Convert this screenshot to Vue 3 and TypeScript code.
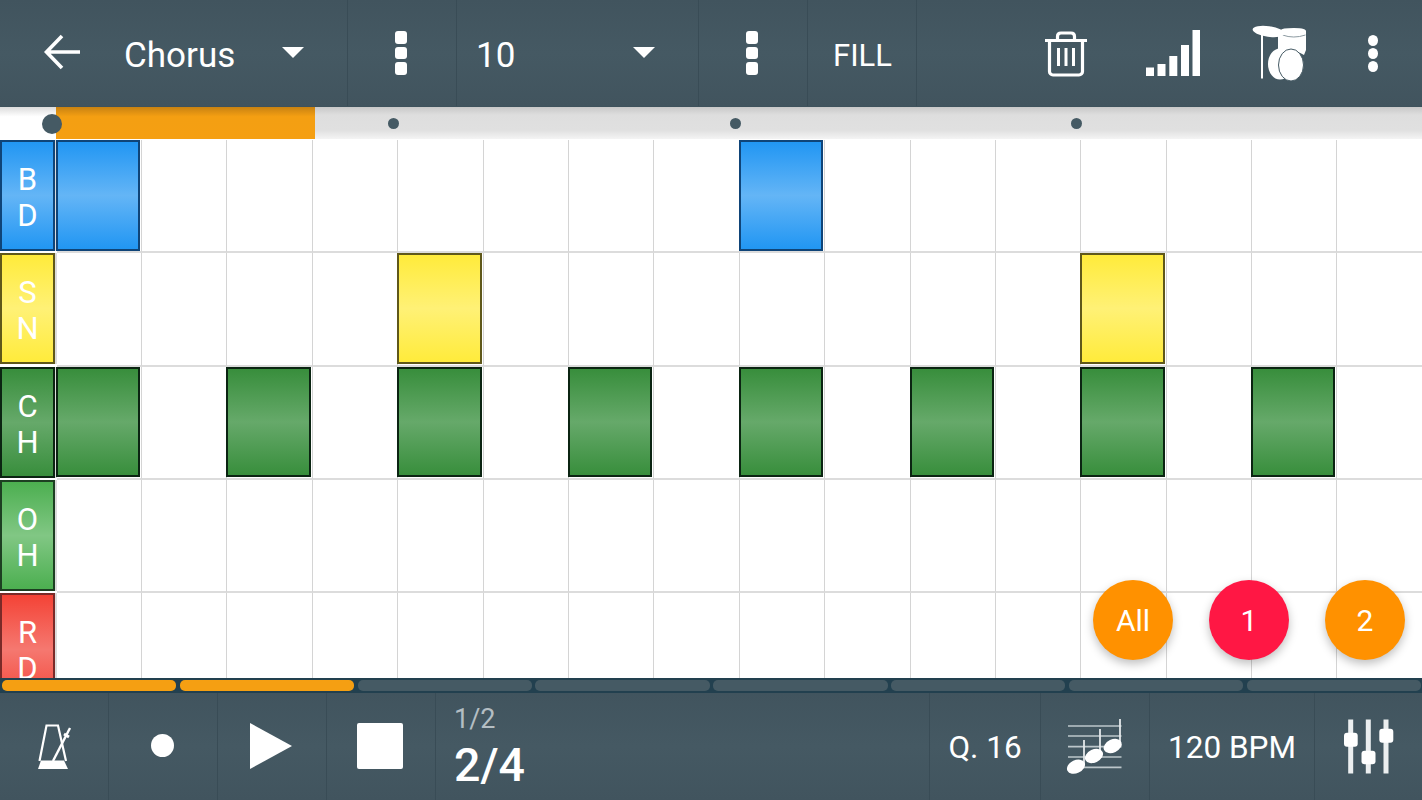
<script setup lang="ts">
type Lane = { label: string[]; kind: string; steps: number[] }

const lanes: Lane[] = [
  { label: ['B', 'D'], kind: 'blue', steps: [0, 8] },
  { label: ['S', 'N'], kind: 'yellow', steps: [4, 12] },
  { label: ['C', 'H'], kind: 'dkgreen', steps: [0, 2, 4, 6, 8, 10, 12, 14] },
  { label: ['O', 'H'], kind: 'green', steps: [] },
  { label: ['R', 'D'], kind: 'red', steps: [] }
]
const stepIndexes = Array.from({ length: 16 }, (_, i) => i)
const patterns = [true, true, false, false, false, false, false, false]
const markers = [393, 735, 1076]
</script>

<template>
  <div class="app">
    <header class="bar top">
      <div class="cell back">
        <svg width="40" height="40" viewBox="0 0 40 40" class="ico">
          <path d="M38 20H5M20 4 4.500 20 20 36" fill="none" stroke="#fff" stroke-width="3.600" />
        </svg>
        <span class="title">Chorus</span>
        <span class="caret"></span>
      </div>
      <div class="cell more"><span class="dots"><i></i><i></i><i></i></span></div>
      <div class="cell num">
        <span class="title">10</span>
        <span class="caret"></span>
      </div>
      <div class="cell more"><span class="dots"><i></i><i></i><i></i></span></div>
      <div class="cell fill">FILL</div>
      <div class="tools">
        <svg class="t-trash" width="42" height="46" viewBox="0 0 42 46">
          <path d="M0 9.500h42M4.500 9.500v31a3.500 3.500 0 0 0 3.500 3.500h26a3.500 3.500 0 0 0 3.500-3.500v-31M12.500 9V5.500Q12.500 2 16 2h10q3.500 0 3.500 3.500V9" fill="none" stroke="#fff" stroke-width="3.200" />
          <path d="M13.500 17v18M21 17v18M28.500 17v18" stroke="#fff" stroke-width="3" />
        </svg>
        <svg class="t-bars" width="54" height="46" viewBox="0 0 54 46">
          <rect x="0" y="37.500" width="8" height="8.500" fill="#fff" />
          <rect x="11.500" y="34" width="8" height="12" fill="#fff" />
          <rect x="23.300" y="26" width="8" height="20" fill="#fff" />
          <rect x="35" y="15" width="8" height="31" fill="#fff" />
          <rect x="46.500" y="0" width="7.500" height="46" fill="#fff" />
        </svg>
        <svg class="t-drum" width="70" height="65" viewBox="0 0 70 65">
          <path d="M36 10q0-2 13-2t12 4v18l-2 5q-10-6-20-4l-6 3V16z" fill="#fff" />
          <path d="M37.500 15q11 4 23 0" fill="none" stroke="#8d9ba2" stroke-width="1" />
          <path d="M17 14v44.500" stroke="#fff" stroke-width="2" />
          <ellipse cx="23.500" cy="11.500" rx="16" ry="5.300" transform="rotate(8 23.500 11.500)" fill="#fff" />
          <ellipse cx="35" cy="44" rx="12" ry="15.500" fill="#fff" />
          <ellipse cx="46" cy="45" rx="12.500" ry="16" fill="#fff" stroke="#455a64" stroke-width="1" />
        </svg>
        <span class="dots round"><i></i><i></i><i></i></span>
      </div>
    </header>

    <div class="timeline">
      <div class="progress"></div>
      <span class="playhead"></span>
      <span v-for="m in markers" :key="m" class="marker" :style="{ left: m + 'px' }"></span>
    </div>

    <main class="grid-wrap">
      <div class="grid">
        <template v-for="lane in lanes" :key="lane.kind">
          <div class="lane-head" :class="lane.kind">
            <span v-for="c in lane.label" :key="c">{{ c }}</span>
          </div>
          <div v-for="s in stepIndexes" :key="s" class="step">
            <div v-if="lane.steps.includes(s)" class="note" :class="lane.kind"></div>
          </div>
        </template>
      </div>
      <div class="fabs">
        <button type="button" class="fab orange">All</button>
        <button type="button" class="fab pink">1</button>
        <button type="button" class="fab orange">2</button>
      </div>
    </main>

    <div class="patterns">
      <span v-for="(on, i) in patterns" :key="i" class="pat" :class="{ on }"></span>
    </div>

    <footer class="bar bottom">
      <div class="cell b-icon">
        <svg class="metro" width="50" height="60" viewBox="0 0 50 60">
          <path d="M8.500 45 15.500 9.500H27L35 45" fill="none" stroke="#fff" stroke-width="2.200" />
          <path d="M10 44.500h23l4 8.500H7z" fill="#fff" />
          <path d="M22 45 39 12" stroke="#fff" stroke-width="2.400" />
          <path d="m33 18 5 3" stroke="#fff" stroke-width="3" />
        </svg>
      </div>
      <div class="cell b-icon"><span class="rec"></span></div>
      <div class="cell b-icon">
        <svg width="44" height="48" viewBox="0 0 44 48"><path d="M1 1v46l42-23z" fill="#fff" /></svg>
      </div>
      <div class="cell b-icon"><span class="stop"></span></div>
      <div class="cell pos">
        <span class="pos-sub">1/2</span>
        <span class="pos-main">2/4</span>
      </div>
      <div class="cell q">Q. 16</div>
      <div class="cell score">
        <svg width="70" height="65" viewBox="0 0 70 65">
          <path d="M8 11h53.500M8 21h53.500M8 31.700h53.500M8 42h53.500M8 52.300h53.500" stroke="#bcc6ca" stroke-width="1.700" />
          <path d="M24 25v25M40 14v26M60 4v26" stroke="#e4e8ea" stroke-width="1.800" />
          <ellipse cx="16" cy="51.700" rx="9.500" ry="6.500" transform="rotate(-25 16 51.700)" fill="#fff" />
          <ellipse cx="34" cy="41" rx="9.500" ry="6.500" transform="rotate(-25 34 41)" fill="#fff" />
          <ellipse cx="52.700" cy="31" rx="9.500" ry="6.500" transform="rotate(-25 52.700 31)" fill="#fff" />
        </svg>
      </div>
      <div class="cell bpm">120 BPM</div>
      <div class="cell mixer">
        <svg width="70" height="70" viewBox="0 0 70 70">
          <path d="M15.700 9.500v54M33.300 9.500v54M51 9.500v54" stroke="#eceff0" stroke-width="5" />
          <rect x="9" y="22.700" width="13.700" height="14" rx="3" fill="#fff" />
          <rect x="26.500" y="40.700" width="14" height="13.600" rx="3" fill="#fff" />
          <rect x="44.300" y="18.700" width="14" height="14" rx="3" fill="#fff" />
        </svg>
      </div>
    </footer>
  </div>
</template>

<style>
html,
body {
  margin: 0;
  background: #fff;
}
</style>

<style scoped>
.app {
  width: 1422px;
  height: 800px;
  display: flex;
  flex-direction: column;
  overflow: hidden;
  font-family: Roboto, 'Liberation Sans', sans-serif;
  color: #fff;
  background: #fff;
}
.bar {
  display: flex;
  flex: none;
  background: linear-gradient(#41545e, #455963 50%, #41545e);
}
.cell {
  display: flex;
  align-items: center;
  box-sizing: border-box;
  height: 100%;
  border-right: 1px solid #394c56;
  flex: none;
}
.top {
  height: 107px;
  position: relative;
  z-index: 2;
  border-bottom: 1px solid #3e525c;
  box-sizing: border-box;
}
.back {
  width: 348px;
  padding-left: 42px;
}
.ico {
  flex: none;
  width: 40px;
  margin-top: -3px;
}
.title {
  font-size: 35px;
  line-height: 1;
  margin-top: 4px;
}
.back .title {
  margin-left: 42px;
}
.caret {
  width: 0;
  height: 0;
  border-left: 11.500px solid transparent;
  border-right: 11.500px solid transparent;
  border-top: 11.500px solid #fff;
  margin-top: -1px;
}
.back .caret {
  margin-left: 47px;
}
.more {
  width: 109px;
  justify-content: center;
  padding-right: 2px;
}
.dots {
  display: flex;
  flex-direction: column;
  gap: 3px;
}
.dots i {
  width: 12px;
  height: 12.500px;
  border-radius: 3px;
  background: #fff;
}
.num {
  width: 242px;
  padding-left: 19px;
}
.num .caret {
  margin-left: 118px;
}
.fill {
  width: 109px;
  padding-left: 25px;
  padding-top: 4px;
  font-size: 31px;
}
.tools {
  flex: 1;
  position: relative;
  height: 100%;
}
.tools svg,
.tools .round {
  position: absolute;
}
.t-trash {
  left: 128px;
  top: 30.500px;
}
.t-bars {
  left: 229px;
  top: 30px;
}
.t-drum {
  left: 328px;
  top: 20px;
}
.round {
  left: 451px;
  top: 35px;
  gap: 2px;
}
.dots.round i {
  width: 10px;
  height: 11px;
  border-radius: 50%;
}
.timeline {
  height: 32px;
  position: relative;
  flex: none;
  background: linear-gradient(#c8c8c8 0, #dedede 25%, #e0e0e0 72%, #f4f4f4 100%);
}
.timeline::before {
  content: '';
  position: absolute;
  left: 0;
  top: 0;
  bottom: 0;
  width: 56px;
  background: linear-gradient(#dcdcdc 0, #fff 30%);
}
.progress {
  position: absolute;
  left: 56px;
  top: 0;
  width: 259px;
  height: 100%;
  background: linear-gradient(#c88212 0, #f49f12 30%, #f59f12 100%);
}
.playhead {
  position: absolute;
  left: 42px;
  top: 7px;
  width: 20px;
  height: 20px;
  border-radius: 50%;
  background: #455a64;
}
.marker {
  position: absolute;
  top: 11px;
  width: 11px;
  height: 11px;
  margin-left: -5.500px;
  border-radius: 50%;
  background: #455a64;
}
.grid-wrap {
  height: 539px;
  flex: none;
  position: relative;
  overflow: hidden;
}
.grid {
  display: grid;
  grid-template-columns: 56.600px repeat(16, 85.400px);
  grid-auto-rows: 113.300px;
  padding-top: 1px;
}
.step {
  box-sizing: border-box;
  border-right: 1px solid #d4d4d4;
  border-bottom: 2px solid #dcdcdc;
  background: #fff;
}
.lane-head {
  box-sizing: border-box;
  width: 55px;
  height: 111px;
  border: 2px solid;
  font-size: 31px;
  line-height: 36px;
  display: flex;
  flex-direction: column;
  align-items: center;
  padding-top: 20px;
  box-shadow: 2px 0 0 #dcdcdc;
}
.note {
  box-sizing: border-box;
  height: 110.500px;
  margin: 0 1px 0 -1px;
  border: 2px solid;
}
.blue {
  background: linear-gradient(#2196f3, #64b5f6 50%, #2196f3);
  border-color: #0f4478;
}
.yellow {
  background: linear-gradient(#ffeb3b, #fff176 50%, #ffeb3b);
  border-color: #5f581a;
}
.dkgreen {
  background: linear-gradient(#388e3c, #66a96a 50%, #388e3c);
  border-color: #0b2412;
}
.green {
  background: linear-gradient(#4caf50, #81c784 50%, #4caf50);
  border-color: #1d3f22;
}
.red {
  background: linear-gradient(#f44336, #f57870 50%, #f44336);
  border-color: #7a2a28;
}
.lane-head.red {
  height: 113px;
}
.fabs {
  position: absolute;
  left: 1093px;
  top: 441px;
  display: flex;
  gap: 36px;
}
.fab {
  width: 80px;
  height: 80px;
  border-radius: 50%;
  border: 0;
  padding: 0;
  color: #fff;
  font: 30px Roboto, sans-serif;
  box-shadow: 0 4px 10px rgba(0, 0, 0, 0.25);
}
.orange {
  background: #ff9100;
}
.pink {
  background: #ff1744;
}
.patterns {
  height: 15px;
  flex: none;
  background: #22404f;
  box-sizing: border-box;
  padding: 2px 1px 2px 2px;
  display: flex;
  gap: 3.500px;
}
.pat {
  flex: 1;
  border-radius: 5px;
  background: #455a64;
}
.pat.on {
  background: #f59f12;
}
.bottom {
  height: 107px;
}
.b-icon {
  width: 109px;
  justify-content: center;
  padding: 0 2px 2px 0;
}
.metro {
  margin-left: 5px;
}
.rec {
  width: 23px;
  height: 23px;
  border-radius: 50%;
  background: #fff;
}
.stop {
  width: 46px;
  height: 46px;
  border-radius: 2px;
  background: #fff;
}
.pos {
  width: 494px;
  flex-direction: column;
  align-items: flex-start;
  padding-left: 18px;
}
.pos-sub {
  font-size: 27px;
  line-height: 30px;
  color: #b4bec3;
  margin-top: 11px;
}
.pos-main {
  font-size: 46.500px;
  font-weight: 500;
  line-height: 50px;
  margin-top: 6px;
}
.q {
  width: 111px;
  justify-content: center;
  font-size: 31.500px;
  padding-top: 2px;
}
.score {
  width: 109px;
  justify-content: center;
  padding-top: 2px;
}
.bpm {
  width: 165px;
  justify-content: center;
  font-size: 31.500px;
  padding-top: 2px;
}
.mixer {
  flex: 1;
  border-right: 0;
  justify-content: center;
  padding: 0 0 3px 3px;
}
</style>
